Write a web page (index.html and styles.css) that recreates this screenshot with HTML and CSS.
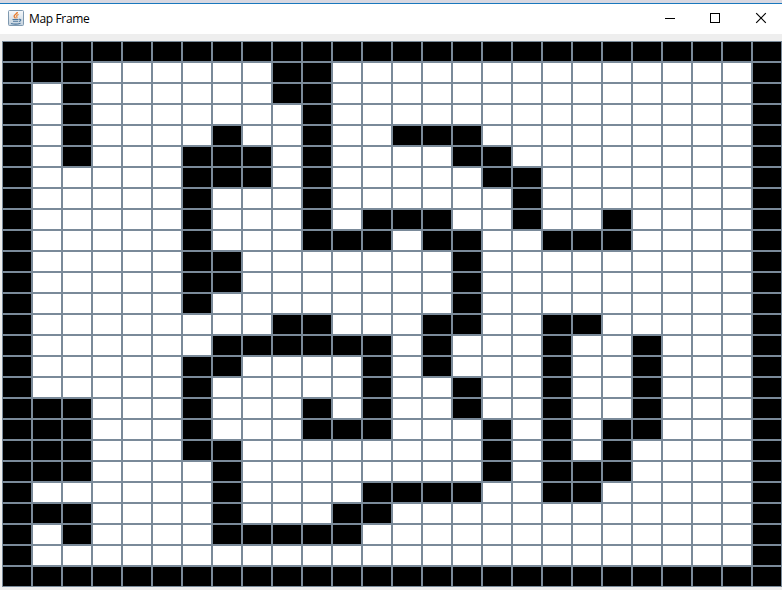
FILE: index.html
```html
<!DOCTYPE html>
<html lang="en">
<head>
<meta charset="utf-8">
<title>Map Frame</title>
<link rel="stylesheet" href="styles.css">
</head>
<body>
<div class="window">
  <header class="titlebar">
    <svg class="app-icon" viewBox="0 0 16 16" width="16" height="16">
      <defs>
        <linearGradient id="tile" x1="0" y1="0" x2="0" y2="1">
          <stop offset="0" stop-color="#f7f9fb"/>
          <stop offset="1" stop-color="#c3d1dd"/>
        </linearGradient>
      </defs>
      <rect x=".5" y=".5" width="15" height="15" rx="1" fill="url(#tile)" stroke="#7f99b0"/>
      <path d="M9.3 2C9.6 4 5.6 4.6 6.2 6.4C6.5 7.2 7.2 7.6 7.4 8.4" fill="none" stroke="#e8792b" stroke-width="1.4"/>
      <path d="M10.6 4.6C8.5 5.3 8.2 6 8.9 6.8C9.3 7.4 9 7.9 8.6 8.3" fill="none" stroke="#ee8a3c" stroke-width="1.1"/>
      <path d="M4.5 9.5H10.5M5 11.3H10.2M3 13.4C5.5 14.2 10 14.2 12.5 13.2M11 9.4C13.6 8.8 13.4 11 11 11.5" fill="none" stroke="#4c779d" stroke-width="1.1"/>
    </svg>
    <h1 class="title">Map Frame</h1>
    <div class="controls">
      <svg class="control" viewBox="0 0 45 30"><path d="M10 14.5H20" /></svg>
      <svg class="control" viewBox="0 0 45 30"><path d="M10.5 9.5H19.5V18.5H10.5Z" /></svg>
      <svg class="control close" viewBox="0 0 37 30"><path d="M11.2 9.2L20.8 18.8M20.8 9.2L11.2 18.8" /></svg>
    </div>
  </header>
  <main class="map" id="map"></main>
</div>
<script src="map.js"></script>
</body>
</html>
```
FILE: styles.css
```css
body {
  margin: 0;
  overflow: hidden;
  background: #eee;
}

.window {
  box-sizing: border-box;
  width: 782px;
  height: 590px;
  border-top: 3px solid #d8d8e1;
}

.titlebar {
  box-sizing: border-box;
  display: flex;
  align-items: center;
  height: 31px;
  padding-left: 8px;
  border-top: 1px solid #1978bd;
  background: #fff;
}

.app-icon {
  flex: none;
  margin-bottom: 2px;
}

.title {
  flex: 1;
  margin: 0 0 1px 5px;
  font: 400 12px/16px "Open Sans", "Noto Sans", sans-serif;
  letter-spacing: -0.35px;
  color: #000;
}

.controls {
  display: flex;
  width: 127px;
}

.control {
  flex: none;
  width: 45px;
  height: 30px;
  fill: none;
  stroke: #000;
  stroke-width: 1;
  shape-rendering: crispEdges;
}

.close {
  width: 37px;
  stroke-width: 1.2;
  shape-rendering: auto;
}

.map {
  display: grid;
  grid-template-columns: repeat(26, 30px);
  grid-auto-rows: 21px;
  margin: 7px 0 0 2px;
}

.cell {
  border: 1px solid #7a8a99;
  background: #fff;
}

.wall {
  background: #000;
}
```
FILE: map.js
```js
const rows = [
  "##########################",
  "###......##..............#",
  "#.#......##..............#",
  "#.#.......#..............#",
  "#.#....#..#..###.........#",
  "#.#...###.#....##........#",
  "#.....###.#.....##.......#",
  "#.....#...#......#.......#",
  "#.....#...#.###..#..#....#",
  "#.....#...###.##..###....#",
  "#.....##.......#.........#",
  "#.....##.......#.........#",
  "#.....#........#.........#",
  "#........##...##..##.....#",
  "#......######.#...#..#...#",
  "#.....##....#.#...#..#...#",
  "#.....#.....#..#..#..#...#",
  "###...#...#.#..#..#..#...#",
  "###...#...###...#.#.##...#",
  "###...##........#.#.#....#",
  "###....#........#.###....#",
  "#......#....####..##.....#",
  "###....#...##............#",
  "#.#....#####.............#",
  "#........................#",
  "##########################"
];

const map = document.getElementById("map");
for (const row of rows) {
  for (const mark of row) {
    const cell = document.createElement("div");
    cell.className = mark === "#" ? "cell wall" : "cell";
    map.append(cell);
  }
}
```
